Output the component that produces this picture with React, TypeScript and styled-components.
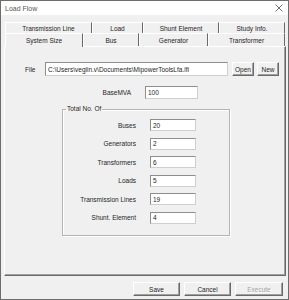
import { Fragment } from 'react';
import styled, { createGlobalStyle } from 'styled-components';

const GlobalStyle = createGlobalStyle`
  html, body {
    margin: 0;
    padding: 0;
    background: #f0f0f0;
  }
  body {
    font-family: 'Liberation Sans', Arial, sans-serif;
  }
`;

const Window = styled.div`
  width: 289px;
  height: 300px;
  box-sizing: border-box;
  border: 1px solid #6d6d6d;
  background: #f0f0f0;
  display: flex;
  flex-direction: column;
  font-family: 'Liberation Sans', Arial, sans-serif;
  font-size: 6.5px;
  color: #1e1e1e;
`;

const TitleBar = styled.div`
  height: 14px;
  flex: none;
  background: #fff;
  display: flex;
  align-items: center;
  justify-content: space-between;
  padding: 0 5px 0 4px;
`;

const Title = styled.span`
  font-size: 7px;
  color: #555;
`;

const Body = styled.div`
  flex: 1;
  display: flex;
  flex-direction: column;
  padding: 7px 2px 3px 3px;
`;

const TabStrip = styled.div`
  display: flex;
  flex-direction: column;
  margin: 0 1px;
`;

const TabRow = styled.div<{ $h: number }>`
  display: flex;
  height: ${(p) => p.$h}px;
`;

const Tab = styled.div<{ $w: number; $active?: boolean }>`
  box-sizing: border-box;
  width: ${(p) => p.$w}px;
  display: flex;
  align-items: center;
  justify-content: center;
  border-top: 1px solid #fff;
  border-left: 1px solid #fff;
  border-right: 1px solid #696969;
  background: #f0f0f0;
  position: relative;
  z-index: ${(p) => (p.$active ? 1 : 0)};
  margin-bottom: ${(p) => (p.$active ? -1 : 0)}px;
  white-space: nowrap;
`;

const Panel = styled.div`
  flex: none;
  height: 230px;
  box-sizing: border-box;
  border: 1px solid;
  border-color: #fff #696969 #696969 #fff;
  box-shadow: inset -1px -1px #a0a0a0;
  padding: 15px 0 0 20px;
  display: flex;
  flex-direction: column;
`;

const FileRow = styled.div`
  display: flex;
  align-items: center;
  height: 14px;
`;

const FileLabel = styled.span`
  width: 20px;
`;

const TextBox = styled.div<{ $w: number; $h?: number }>`
  box-sizing: border-box;
  width: ${(p) => p.$w}px;
  height: ${(p) => p.$h ?? 12}px;
  background: #fff;
  border: 1px solid;
  border-color: #8e8e8e #cfcfcf #cfcfcf #8e8e8e;
  display: flex;
  align-items: center;
  padding-left: 2px;
  white-space: nowrap;
  overflow: hidden;
`;

const Button = styled.div<{ $w: number; $disabled?: boolean }>`
  box-sizing: border-box;
  width: ${(p) => p.$w}px;
  height: 14px;
  display: flex;
  align-items: center;
  justify-content: center;
  background: #f0f0f0;
  border: 1px solid;
  border-color: #fff #696969 #696969 #fff;
  box-shadow: inset -1px -1px #a0a0a0;
  color: ${(p) => (p.$disabled ? '#a0a0a0' : '#1e1e1e')};
  text-shadow: ${(p) => (p.$disabled ? '1px 1px #fff' : 'none')};
`;

const FileButtons = styled.div`
  display: flex;
  gap: 3px;
  margin-left: 4px;
`;

const BaseRow = styled.div`
  display: flex;
  align-items: center;
  margin-top: 10px;
`;

const BaseLabel = styled.span`
  width: 106px;
  text-align: right;
  margin-right: 14px;
`;

const Group = styled.fieldset`
  box-sizing: border-box;
  width: 168px;
  height: 131px;
  margin: 6px 0 0 37px;
  padding: 6px 0 0 0;
  min-inline-size: 0;
  border: 1px solid #b4b4b4;
  box-shadow: 1px 1px #fff, inset 1px 1px #fff;
`;

const Legend = styled.legend`
  padding: 0 1px;
  margin-left: 3px;
  line-height: 8px;
`;

const CountGrid = styled.div`
  display: grid;
  grid-template-columns: 73px 46px;
  grid-auto-rows: 12px;
  column-gap: 14px;
  row-gap: 6.5px;
  align-items: center;
`;

const CountLabel = styled.span`
  text-align: right;
  white-space: nowrap;
`;

const ButtonRow = styled.div`
  display: flex;
  justify-content: flex-end;
  gap: 4px;
  margin: 6px 3px 0 0;
`;

const CloseIcon = () => (
  <svg width="8" height="8" viewBox="0 0 8 8">
    <path d="M0.5 0.5 L7.5 7.5 M7.5 0.5 L0.5 7.5" stroke="#6f6f6f" strokeWidth="1" fill="none" />
  </svg>
);

const backTabs = [
  { label: 'Transmission Line', w: 87 },
  { label: 'Load', w: 51 },
  { label: 'Shunt Element', w: 76 },
  { label: 'Study Info.', w: 66 },
];

const frontTabs = [
  { label: 'System Size', w: 78 },
  { label: 'Bus', w: 56 },
  { label: 'Generator', w: 69 },
  { label: 'Transformer', w: 77 },
];

const counts = [
  ['Buses', '20'],
  ['Generators', '2'],
  ['Transformers', '6'],
  ['Loads', '5'],
  ['Transmission Lines', '19'],
  ['Shunt. Element', '4'],
];

export default function App() {
  return (
    <>
      <GlobalStyle />
      <Window>
        <TitleBar>
          <Title>Load Flow</Title>
          <CloseIcon />
        </TitleBar>
        <Body>
          <TabStrip>
            <TabRow $h={11}>
              {backTabs.map((t) => (
                <Tab key={t.label} $w={t.w}>
                  {t.label}
                </Tab>
              ))}
            </TabRow>
            <TabRow $h={13}>
              {frontTabs.map((t, i) => (
                <Tab key={t.label} $w={t.w} $active={i === 0}>
                  {t.label}
                </Tab>
              ))}
            </TabRow>
          </TabStrip>
          <Panel>
            <FileRow>
              <FileLabel>File</FileLabel>
              <TextBox $w={183} $h={14}>
                C:\Users\veglin.v\Documents\MipowerToolsLfa.lfi
              </TextBox>
              <FileButtons>
                <Button $w={22}>Open</Button>
                <Button $w={22}>New</Button>
              </FileButtons>
            </FileRow>
            <BaseRow>
              <BaseLabel>BaseMVA</BaseLabel>
              <TextBox $w={53} $h={13}>
                100
              </TextBox>
            </BaseRow>
            <Group>
              <Legend>Total No. Of</Legend>
              <CountGrid>
                {counts.map(([label, value]) => (
                  <Fragment key={label}>
                    <CountLabel>{label}</CountLabel>
                    <TextBox $w={46}>{value}</TextBox>
                  </Fragment>
                ))}
              </CountGrid>
            </Group>
          </Panel>
          <ButtonRow>
            <Button $w={47}>Save</Button>
            <Button $w={47}>Cancel</Button>
            <Button $w={48} $disabled>
              Execute
            </Button>
          </ButtonRow>
        </Body>
      </Window>
    </>
  );
}
